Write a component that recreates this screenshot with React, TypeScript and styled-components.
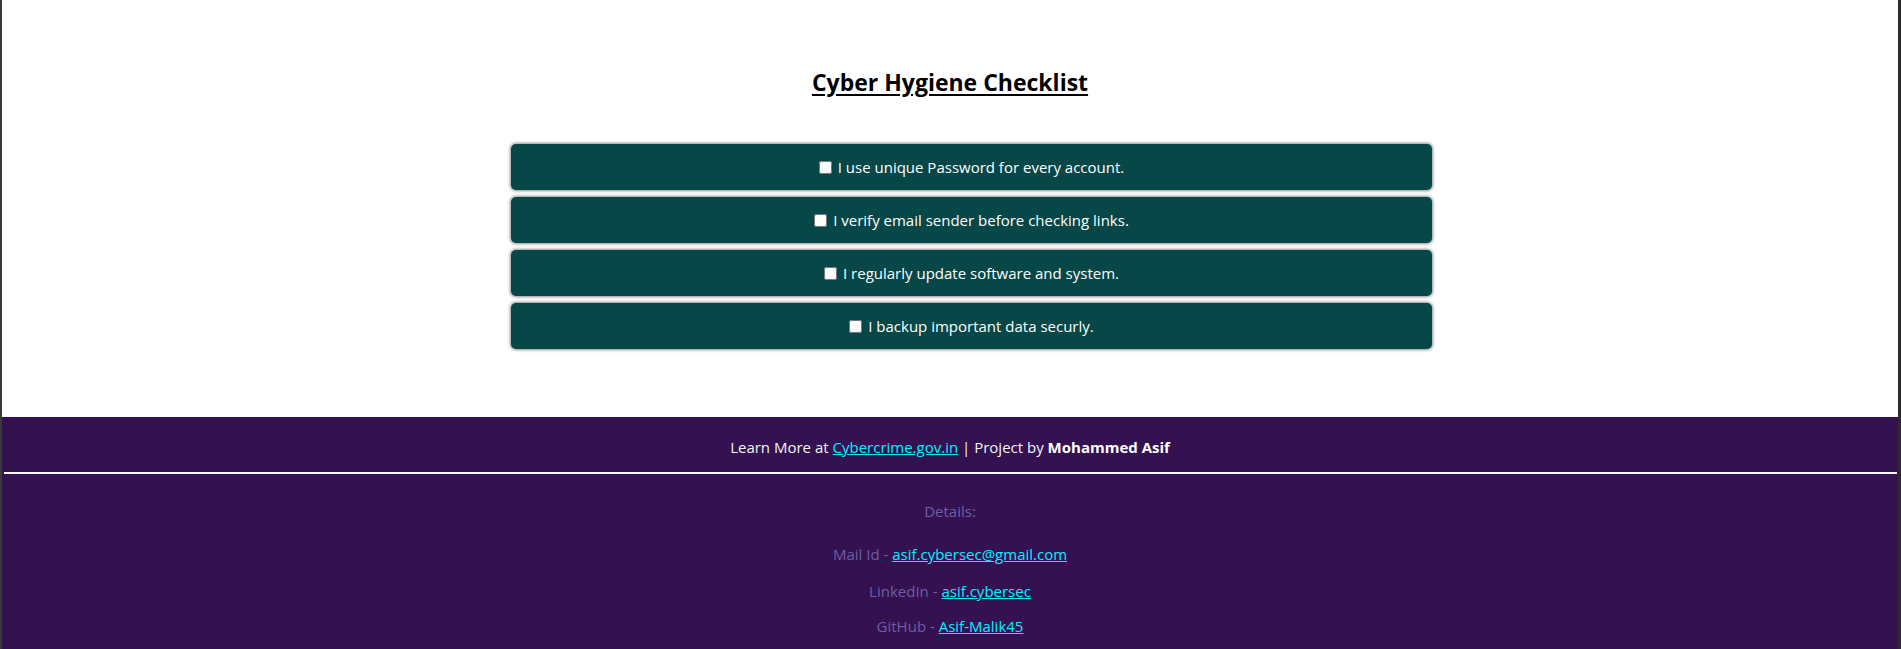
import React from "react";
import styled, { createGlobalStyle } from "styled-components";

const Global = createGlobalStyle`
  html, body { margin: 0; padding: 0; background: #ffffff; }
  body { font-family: "Open Sans", "Noto Sans", sans-serif; }
`;

const Frame = styled.div`
  min-height: 649px;
  border-left: 2px solid #3a3a3a;
  border-right: 3px solid #2b2b2b;
  display: flex;
  flex-direction: column;
  background: #ffffff;
`;

const Main = styled.main`
  display: flex;
  flex-direction: column;
  align-items: center;
  padding-top: 66px;
  padding-bottom: 68px;
`;

const Title = styled.h2`
  margin: 0;
  font-size: 23px;
  line-height: 32px;
  font-weight: 700;
  color: #000;
  text-decoration: underline;
  text-underline-offset: 3px;
`;

const List = styled.ul`
  list-style: none;
  align-self: stretch;
  margin: 46px 0 0 0;
  padding: 0 0 0 43px;
  display: flex;
  flex-direction: column;
  align-items: center;
  gap: 7px;
`;

const Item = styled.li`
  width: 921px;
  height: 46px;
  box-sizing: border-box;
  background: #084747;
  border-radius: 5px;
  box-shadow: 0 0 3px 1px rgba(80, 80, 80, 0.65);
  display: flex;
  align-items: center;
  justify-content: center;
  color: #ffffff;
  font-size: 15px;
`;

const Label = styled.label`
  display: flex;
  align-items: center;
  gap: 6px;
  cursor: pointer;
`;

const Box = styled.input`
  width: 13px;
  height: 13px;
  margin: 0;
  accent-color: #ffffff;
`;

const Footer = styled.footer`
  background: #341150;
  display: flex;
  flex-direction: column;
  align-items: stretch;
  padding-bottom: 20px;
  flex: 1;
`;

const Lead = styled.p`
  margin: 0;
  padding-top: 18px;
  text-align: center;
  font-size: 15px;
  line-height: 24px;
  color: #f4f4f4;
`;

const Strong = styled.b`
  font-weight: 700;
  color: #ffffff;
`;

const Link = styled.a`
  color: #00f0ff;
  text-decoration: underline;
`;

const Rule = styled.hr`
  border: none;
  height: 2px;
  background: #ffffff;
  margin: 13px 1px 0 2px;
`;

const Details = styled.div`
  display: flex;
  flex-direction: column;
  align-items: center;
  color: #6e5ea6;
  font-size: 15px;
  line-height: 24px;
`;

const DetailRow = styled.p<{ $top: number }>`
  margin: ${(p) => p.$top}px 0 0 0;
  text-align: center;
`;

const items = [
  "I use unique Password for every account.",
  "I verify email sender before checking links.",
  "I regularly update software and system.",
  "I backup important data securly.",
];

export default function App() {
  return (
    <>
      <Global />
      <Frame>
        <Main>
          <Title>Cyber Hygiene Checklist</Title>
          <List>
            {items.map((t) => (
              <Item key={t}>
                <Label>
                  <Box type="checkbox" />
                  {t}
                </Label>
              </Item>
            ))}
          </List>
        </Main>
        <Footer>
          <Lead>
            Learn More at <Link href="#">Cybercrime.gov.in</Link> | Project by{" "}
            <Strong>Mohammed Asif</Strong>
          </Lead>
          <Rule />
          <Details>
            <DetailRow $top={25}>Details:</DetailRow>
            <DetailRow $top={19}>
              Mail Id - <Link href="#">asif.cybersec@gmail.com</Link>
            </DetailRow>
            <DetailRow $top={13}>
              LinkedIn - <Link href="#">asif.cybersec</Link>
            </DetailRow>
            <DetailRow $top={11}>
              GitHub - <Link href="#">Asif-Malik45</Link>
            </DetailRow>
          </Details>
        </Footer>
      </Frame>
    </>
  );
}
